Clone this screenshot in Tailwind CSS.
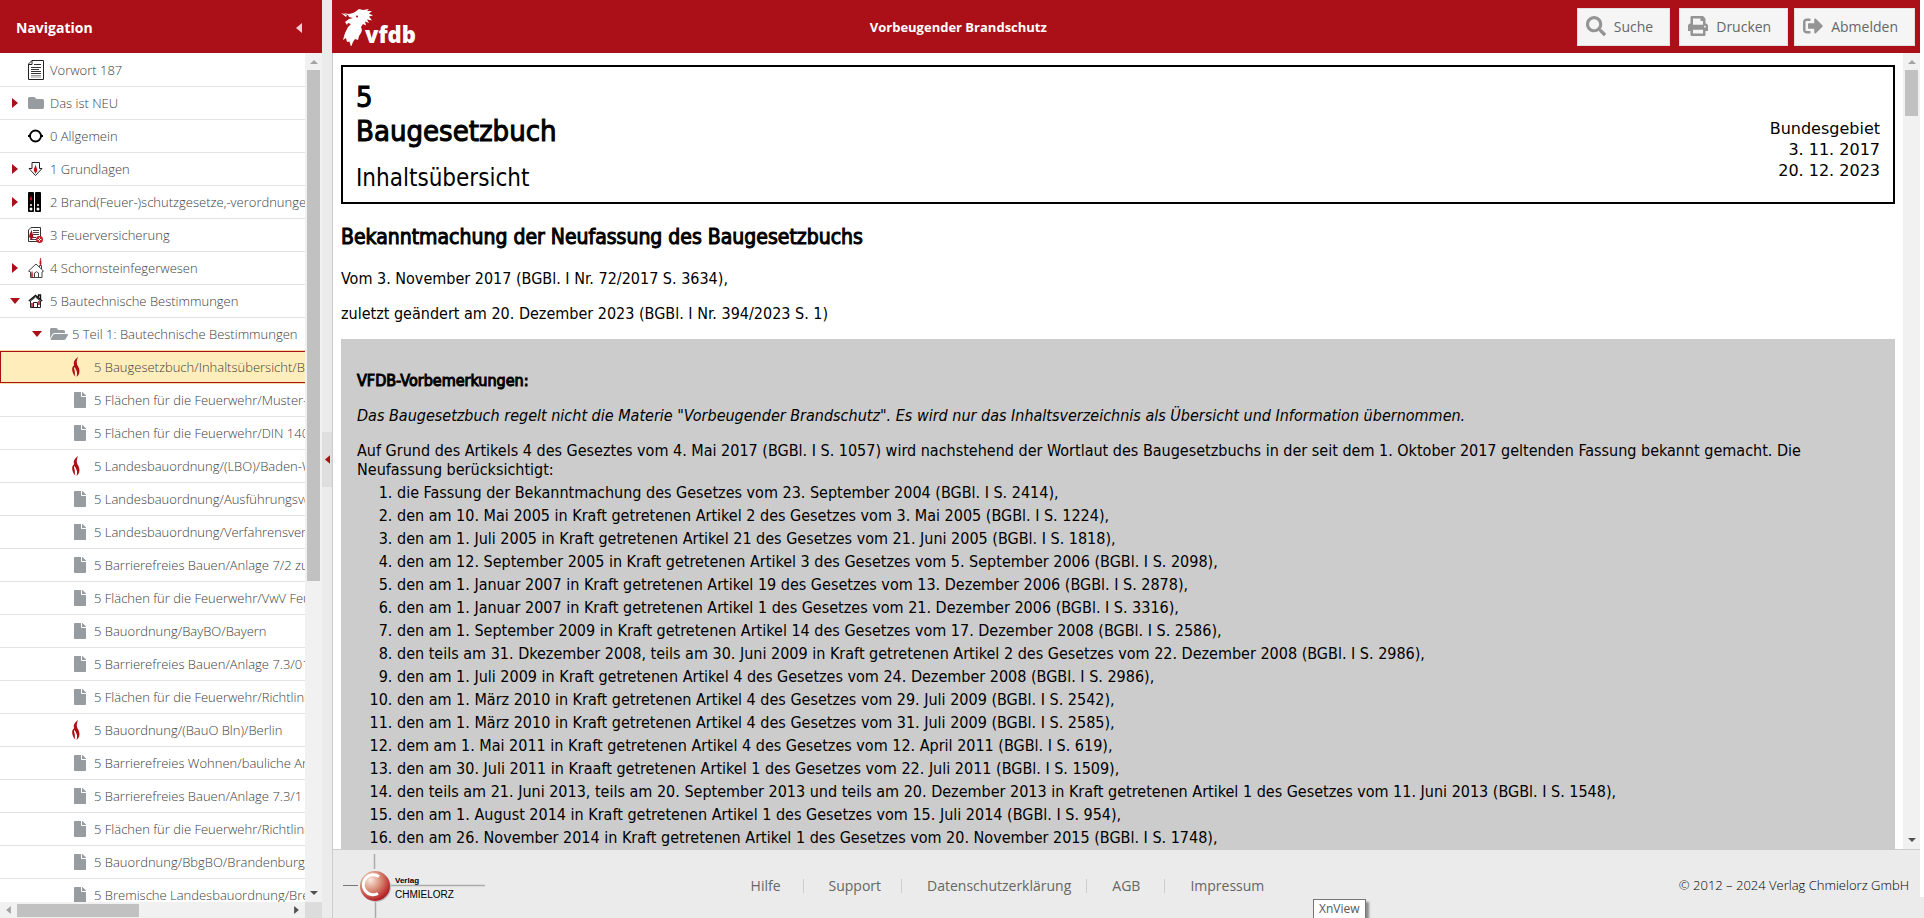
<!DOCTYPE html>
<html lang="de">
<head>
    <meta charset="UTF-8">
    <meta name="viewport" content="width=device-width, initial-scale=1.0">
    <title>Vorbeugender Brandschutz</title>
    <script src="https://cdn.jsdelivr.net/npm/@tailwindcss/browser@4"></script>
</head>
<body class="flex h-screen overflow-hidden bg-[#ebebeb] font-['Open_Sans',sans-serif]">
    <!-- Icon sprite -->
    <svg class="hidden">
        <symbol id="file" viewBox="0 0 384 512"><path d="M224 136V0H24C10.7 0 0 10.7 0 24v464c0 13.3 10.7 24 24 24h336c13.3 0 24-10.7 24-24V160H248c-13.2 0-24-10.8-24-24zm160-14.1v6.1H256V0h6.1c6.4 0 12.5 2.5 17 7l97.9 98c4.5 4.5 7 10.6 7 16.9z"/></symbol>
        <symbol id="flame" viewBox="0 0 8 20"><path d="M6 0C2.500 3 1 5 2.200 8 .5 9.500 0 11 .2 13c.2 2.500 1.300 4.500 3 6.500C2.500 16.500 3.300 15 2.200 12 1.900 11 2 10.500 2.500 10c2 3.500 3.500 5 2 10C7 18.500 7.900 15.500 7.300 12.500 7 10.500 6 9.500 5.300 8 4.300 5.500 4.800 3 6 0z"/></symbol>
        <symbol id="right" viewBox="0 0 6 10"><path d="M0 0l6 5-6 5z"/></symbol>
        <symbol id="down" viewBox="0 0 10 6"><path d="M0 0h10L5 6z"/></symbol>
        <symbol id="left" viewBox="0 0 6 10"><path d="M6 0L0 5l6 5z"/></symbol>
        <symbol id="up" viewBox="0 0 8 4"><path d="M0 4h8L4 0z"/></symbol>
    </svg>

    <!-- Navigation -->
    <nav class="flex w-[322px] shrink-0 flex-col bg-white">
        <header class="flex h-[53px] shrink-0 items-center justify-between bg-[#ab0f17] pr-5 pl-4 pt-[2px]">
            <h2 class="text-sm font-bold text-white">Navigation</h2>
            <button type="button" aria-label="Navigation schließen"><svg class="h-[10px] w-[6px] fill-white/80"><use href="#left"/></svg></button>
        </header>
        <div class="flex min-h-0 flex-1">
            <ul class="min-w-0 flex-1 overflow-hidden pt-px text-[13px] font-light whitespace-nowrap text-[#404040] [&_a]:pt-[2px]">
                <li class="flex h-[33px] items-center border-b border-[#e3e3e3] pl-[28px]">
                    <svg class="mr-[6px] h-5 w-4 shrink-0" viewBox="0 0 16 20"><path d="M4 .500h11.500v19H.5V4z" fill="#fff" stroke="#222"/><path d="M.5 4.500H4V.5" fill="none" stroke="#222"/><path d="M6 4.500h7M3 7.500h10M3 9.500h8M3 11.500h10M3 13.500h10" stroke="#333"/><path d="M3 15.500h10M3 17h10" stroke="#999"/></svg>
                    <a href="#">Vorwort 187</a>
                </li>
                <li class="flex h-[33px] items-center border-b border-[#e3e3e3] pl-3">
                    <svg class="mr-[10px] h-[10px] w-[6px] shrink-0 fill-[#ab0f17]"><use href="#right"/></svg>
                    <svg class="mr-[6px] size-4 shrink-0 fill-[#979ca0]" viewBox="0 0 512 512"><path d="M464 128H272l-64-64H48C21.490 64 0 85.490 0 112v288c0 26.510 21.490 48 48 48h416c26.510 0 48-21.490 48-48V176c0-26.510-21.490-48-48-48z"/></svg>
                    <a href="#">Das ist NEU</a>
                </li>
                <li class="flex h-[33px] items-center border-b border-[#e3e3e3] pl-[28px]">
                    <svg class="mr-[6px] size-4 shrink-0" viewBox="0 0 16 16"><circle cx="7.500" cy="8" r="5.500" fill="none" stroke="#000" stroke-width="1.800"/><path d="M0 8h3M12 8h3" stroke="#000" stroke-width="2"/></svg>
                    <a href="#">0 Allgemein</a>
                </li>
                <li class="flex h-[33px] items-center border-b border-[#e3e3e3] pl-3">
                    <svg class="mr-[10px] h-[10px] w-[6px] shrink-0 fill-[#ab0f17]"><use href="#right"/></svg>
                    <svg class="mr-[6px] size-4 shrink-0" viewBox="0 0 16 16"><path d="M4 1.500h7.500v6H14L7.500 14.500 1 7.500h3z" fill="#fff" stroke="#222"/><path d="M7.800 3C8 5 5.500 7 5.800 9.500L7.500 12.500 9.200 10C9.500 7.500 7.800 6 7.800 3z" fill="#c3101a"/></svg>
                    <a href="#">1 Grundlagen</a>
                </li>
                <li class="flex h-[33px] items-center border-b border-[#e3e3e3] pl-3">
                    <svg class="mr-[10px] h-[10px] w-[6px] shrink-0 fill-[#ab0f17]"><use href="#right"/></svg>
                    <svg class="mr-[6px] h-5 w-4 shrink-0" viewBox="0 0 16 20"><rect width="6" height="20" rx="1"/><rect x="7" width="6" height="20" rx="1"/><path d="M3 3C3 5 1.500 5.500 1.800 7.500L3 9l1.200-1.500C4.500 5.500 3 5 3 3z" fill="#c3101a"/><g fill="#fff"><circle cx="3" cy="13" r="1"/><circle cx="10" cy="13" r="1"/><circle cx="3" cy="17" r="1.500"/><circle cx="10" cy="17" r="1.500"/></g></svg>
                    <a href="#">2 Brand(Feuer-)schutzgesetze,-verordnungen</a>
                </li>
                <li class="flex h-[33px] items-center border-b border-[#e3e3e3] pl-[28px]">
                    <svg class="mr-[6px] size-4 shrink-0" viewBox="0 0 16 16"><path d="M3 .500h9.500v14H.5V3z" fill="#fff" stroke="#333"/><path d="M5 3.500h6M5 5.500h6M5 7.500h6M2 10.500h6M2 12.500h6" stroke="#444"/><path d="M3.500 1C4 5 1 6 1.200 10l2.300 3 1.800-3C5.500 7 3.500 5 3.500 1z" fill="#ab0f17"/><circle cx="11.500" cy="12.500" r="2.700" fill="#fff" stroke="#c3101a" stroke-width="1.500"/><path d="M10 11l3 3m0-3l-3 3" stroke="#c3101a"/></svg>
                    <a href="#">3 Feuerversicherung</a>
                </li>
                <li class="flex h-[33px] items-center border-b border-[#e3e3e3] pl-3">
                    <svg class="mr-[10px] h-[10px] w-[6px] shrink-0 fill-[#ab0f17]"><use href="#right"/></svg>
                    <svg class="mr-[6px] h-5 w-4 shrink-0" viewBox="0 0 16 20"><path d="M.5 13L8 6l7.500 7-1.500 1v5.500H2.500V14zM11.500 9V7.500h2V11M6.500 19v-4q2-2.500 4 0v4" fill="#fff" stroke="#444"/><path d="M12.500 0C12.500 3 11 4 12.500 7.500 14 4.500 12.500 3 12.500 0zM4 13.500C4 16 2.500 16.500 4 19.500 5.500 17 4 16 4 13.500z" fill="#c3101a" stroke="#c3101a" stroke-width=".6"/></svg>
                    <a href="#">4 Schornsteinfegerwesen</a>
                </li>
                <li class="flex h-[33px] items-center border-b border-[#e3e3e3] pl-[10px]">
                    <svg class="mr-2 h-[6px] w-[10px] shrink-0 fill-[#ab0f17]"><use href="#down"/></svg>
                    <svg class="mr-[6px] size-4 shrink-0" viewBox="0 0 16 16"><path d="M2.500 8v6.500h10V8L7.500 4z" fill="#fff" stroke="#222"/><path d="M.8 8L7.500 2.500 14.200 8M10.500 4.500V2h2v4" fill="none" stroke="#111" stroke-width="1.400"/><path d="M5.500 14V9.500h4V14" fill="none" stroke="#222"/><path d="M4 10v4M11 8v4" stroke="#c3101a" stroke-width="1.500"/></svg>
                    <a href="#">5 Bautechnische Bestimmungen</a>
                </li>
                <li class="flex h-[33px] items-center border-b border-[#f5dca0] pl-8">
                    <svg class="mr-2 h-[6px] w-[10px] shrink-0 fill-[#ab0f17]"><use href="#down"/></svg>
                    <svg class="mr-1 h-4 w-[18px] shrink-0 fill-[#979ca0]" viewBox="0 0 576 512"><path d="M572.694 292.093L500.270 416.248A63.997 63.997 0 0 1 444.989 448H45.025c-18.523 0-30.064-20.093-20.731-36.093l72.424-124.155A64 64 0 0 1 152 256h399.964c18.523 0 30.064 20.093 20.730 36.093zM152 224h328v-48c0-26.510-21.490-48-48-48H272l-64-64H48C21.490 64 0 85.490 0 112v278.046l69.077-118.418C86.214 242.250 117.989 224 152 224z"/></svg>
                    <a href="#">5 Teil 1: Bautechnische Bestimmungen</a>
                </li>
                <li class="border-b border-[#f5dca0]">
                    <div class="flex h-8 items-center border-y border-l border-[#ab0f17] bg-[#ffeebb] pl-[71px]">
                        <svg class="mr-[14px] h-5 w-2 shrink-0 fill-[#ab0f17]"><use href="#flame"/></svg>
                        <a href="#">5 Baugesetzbuch/Inhaltsübersicht/Bund</a>
                    </div>
                </li>
                <li class="flex h-[33px] items-center border-b border-[#e3e3e3] pl-[74px]">
                    <svg class="mr-2 h-4 w-3 shrink-0 fill-[#979ca0]"><use href="#file"/></svg>
                    <a href="#">5 Flächen für die Feuerwehr/Muster-Richtlinie</a>
                </li>
                <li class="flex h-[33px] items-center border-b border-[#e3e3e3] pl-[74px]">
                    <svg class="mr-2 h-4 w-3 shrink-0 fill-[#979ca0]"><use href="#file"/></svg>
                    <a href="#">5 Flächen für die Feuerwehr/DIN 14090</a>
                </li>
                <li class="flex h-[33px] items-center border-b border-[#e3e3e3] pl-[72px]">
                    <svg class="mr-[14px] h-5 w-2 shrink-0 fill-[#ab0f17]"><use href="#flame"/></svg>
                    <a href="#">5 Landesbauordnung/(LBO)/Baden-Württemberg</a>
                </li>
                <li class="flex h-[33px] items-center border-b border-[#e3e3e3] pl-[74px]">
                    <svg class="mr-2 h-4 w-3 shrink-0 fill-[#979ca0]"><use href="#file"/></svg>
                    <a href="#">5 Landesbauordnung/Ausführungsverordnung</a>
                </li>
                <li class="flex h-[33px] items-center border-b border-[#e3e3e3] pl-[74px]">
                    <svg class="mr-2 h-4 w-3 shrink-0 fill-[#979ca0]"><use href="#file"/></svg>
                    <a href="#">5 Landesbauordnung/Verfahrensverordnung</a>
                </li>
                <li class="flex h-[33px] items-center border-b border-[#e3e3e3] pl-[74px]">
                    <svg class="mr-2 h-4 w-3 shrink-0 fill-[#979ca0]"><use href="#file"/></svg>
                    <a href="#">5 Barrierefreies Bauen/Anlage 7/2 zur VwV</a>
                </li>
                <li class="flex h-[33px] items-center border-b border-[#e3e3e3] pl-[74px]">
                    <svg class="mr-2 h-4 w-3 shrink-0 fill-[#979ca0]"><use href="#file"/></svg>
                    <a href="#">5 Flächen für die Feuerwehr/VwV Feuerwehrflächen</a>
                </li>
                <li class="flex h-[33px] items-center border-b border-[#e3e3e3] pl-[74px]">
                    <svg class="mr-2 h-4 w-3 shrink-0 fill-[#979ca0]"><use href="#file"/></svg>
                    <a href="#">5 Bauordnung/BayBO/Bayern</a>
                </li>
                <li class="flex h-[33px] items-center border-b border-[#e3e3e3] pl-[74px]">
                    <svg class="mr-2 h-4 w-3 shrink-0 fill-[#979ca0]"><use href="#file"/></svg>
                    <a href="#">5 Barrierefreies Bauen/Anlage 7.3/01 Bayern</a>
                </li>
                <li class="flex h-[33px] items-center border-b border-[#e3e3e3] pl-[74px]">
                    <svg class="mr-2 h-4 w-3 shrink-0 fill-[#979ca0]"><use href="#file"/></svg>
                    <a href="#">5 Flächen für die Feuerwehr/Richtlinie</a>
                </li>
                <li class="flex h-[33px] items-center border-b border-[#e3e3e3] pl-[72px]">
                    <svg class="mr-[14px] h-5 w-2 shrink-0 fill-[#ab0f17]"><use href="#flame"/></svg>
                    <a href="#">5 Bauordnung/(BauO Bln)/Berlin</a>
                </li>
                <li class="flex h-[33px] items-center border-b border-[#e3e3e3] pl-[74px]">
                    <svg class="mr-2 h-4 w-3 shrink-0 fill-[#979ca0]"><use href="#file"/></svg>
                    <a href="#">5 Barrierefreies Wohnen/bauliche Anlagen</a>
                </li>
                <li class="flex h-[33px] items-center border-b border-[#e3e3e3] pl-[74px]">
                    <svg class="mr-2 h-4 w-3 shrink-0 fill-[#979ca0]"><use href="#file"/></svg>
                    <a href="#">5 Barrierefreies Bauen/Anlage 7.3/1</a>
                </li>
                <li class="flex h-[33px] items-center border-b border-[#e3e3e3] pl-[74px]">
                    <svg class="mr-2 h-4 w-3 shrink-0 fill-[#979ca0]"><use href="#file"/></svg>
                    <a href="#">5 Flächen für die Feuerwehr/Richtlinie</a>
                </li>
                <li class="flex h-[33px] items-center border-b border-[#e3e3e3] pl-[74px]">
                    <svg class="mr-2 h-4 w-3 shrink-0 fill-[#979ca0]"><use href="#file"/></svg>
                    <a href="#">5 Bauordnung/BbgBO/Brandenburg</a>
                </li>
                <li class="flex h-[33px] items-center border-b border-[#e3e3e3] pl-[74px]">
                    <svg class="mr-2 h-4 w-3 shrink-0 fill-[#979ca0]"><use href="#file"/></svg>
                    <a href="#">5 Bremische Landesbauordnung/Bremen</a>
                </li>
            </ul>
            <div class="flex w-[17px] shrink-0 flex-col items-center justify-between bg-[#f1f1f1] pt-[7px] pb-[7px]">
                <div class="flex min-h-0 flex-1 flex-col items-center gap-[6px]">
                    <svg class="h-1 w-2 shrink-0 fill-[#a3a3a3]"><use href="#up"/></svg>
                    <div class="h-[61.5%] w-[13px] bg-[#c1c1c1]"></div>
                </div>
                <svg class="h-1 w-2 shrink-0 fill-[#505050]" viewBox="0 0 8 4"><path d="M0 0h8L4 4z"/></svg>
            </div>
        </div>
        <div class="flex h-4 shrink-0 bg-[#dcdcdc]">
            <div class="flex flex-1 items-center bg-[#f1f1f1] pr-[6px] pl-[6px]">
                <svg class="mr-[6px] h-2 w-[5px] fill-[#a3a3a3]"><use href="#left"/></svg>
                <div class="h-[13px] w-[122px] bg-[#c1c1c1]"></div>
                <svg class="ml-auto h-2 w-[5px] fill-[#505050]"><use href="#right"/></svg>
            </div>
            <div class="w-[17px]"></div>
        </div>
    </nav>

    <!-- Splitter -->
    <div class="flex w-[10px] shrink-0 items-center">
        <button type="button" aria-label="Navigation einklappen" class="flex h-[55px] w-full items-center justify-center bg-[#dedede]"><svg class="h-[9px] w-[5px] fill-[#ab0f17]"><use href="#left"/></svg></button>
    </div>

    <!-- Main -->
    <div class="flex min-w-0 flex-1 flex-col">
        <header class="flex h-[53px] shrink-0 items-center bg-[#ab0f17] pr-[5px] pl-[9px]">
            <a href="#" class="flex items-center" aria-label="vfdb">
                <svg class="h-[38px] w-[36px] shrink-0 fill-white" viewBox="0 0 36 38"><path d="M14 4L18 1l4 1 6-1-2 2 5 0-3 2.500 4 2-4 1 3 4-5-1 2 3.500-4-1.500 1 4-3-1.500-2 3 1 3-1 3-2 3-1 4-3-1-2 3-2 5-1.500-5.500L6 34l-1-4-3 2 2-7 3-6 3-3-3-1-1 2-2-3 4-3 4-1-4-1-1-2-5-2 6 1 4-1z"/><path d="M0 5l6 2-1 2z"/><circle cx="16" cy="8.500" r="1" fill="#ab0f17"/></svg>
                <span class="-ml-[12px] pt-[14px] text-[22px] leading-6 font-extrabold text-white">vfdb</span>
            </a>
            <h1 class="flex-1 pr-[76px] pt-[2px] text-center text-[13px] font-bold text-white">Vorbeugender Brandschutz</h1>
            <div class="flex gap-[6px] pt-2 pb-[7px] text-sm text-[#666]">
                <button type="button" class="mr-[3px] flex h-[38px] items-center gap-2 border border-[#e0e0e0] bg-[#f5f5f5] px-2 pr-4 pb-[2px]">
                    <svg class="size-5 fill-[#949494]" viewBox="0 0 512 512"><path d="M505 442.700L405.300 343c-4.500-4.500-10.600-7-17-7H372c27.600-35.300 44-79.700 44-128C416 93.100 322.900 0 208 0S0 93.100 0 208s93.100 208 208 208c48.300 0 92.700-16.400 128-44v16.300c0 6.400 2.500 12.500 7 17l99.700 99.700c9.400 9.400 24.600 9.400 33.900 0l28.300-28.300c9.400-9.400 9.400-24.600.1-34zM208 336c-70.700 0-128-57.200-128-128 0-70.700 57.200-128 128-128 70.700 0 128 57.200 128 128 0 70.700-57.200 128-128 128z"/></svg>
                    <span class="pt-[2px]">Suche</span>
                </button>
                <button type="button" class="flex h-[38px] items-center gap-2 border border-[#e0e0e0] bg-[#f5f5f5] px-2 pr-4 pb-[2px]">
                    <svg class="size-5 fill-[#949494]" viewBox="0 0 512 512"><path d="M448 192V77.250c0-8.490-3.370-16.620-9.370-22.630L393.370 9.370c-6-6-14.140-9.370-22.630-9.370H96C78.330 0 64 14.330 64 32v160c-35.350 0-64 28.650-64 64v112c0 8.840 7.160 16 16 16h48v96c0 17.670 14.330 32 32 32h320c17.670 0 32-14.330 32-32v-96h48c8.840 0 16-7.160 16-16V256c0-35.350-28.650-64-64-64zm-64 256H128v-96h256v96zm0-224H128V64h192v48c0 8.840 7.160 16 16 16h48v96zm48 72c-13.250 0-24-10.750-24-24 0-13.260 10.750-24 24-24s24 10.740 24 24c0 13.250-10.750 24-24 24z"/></svg>
                    <span class="pt-[2px]">Drucken</span>
                </button>
                <button type="button" class="flex h-[38px] items-center gap-2 border border-[#e0e0e0] bg-[#f5f5f5] px-2 pr-4 pb-[2px]">
                    <svg class="size-5 fill-[#949494]" viewBox="0 0 512 512"><path d="M497 273L329 441c-15 15-41 4.500-41-17v-96H152c-13.300 0-24-10.700-24-24v-96c0-13.300 10.700-24 24-24h136V88c0-21.400 25.900-32 41-17l168 168c9.300 9.400 9.300 24.600 0 34zM192 436v-40c0-6.600-5.400-12-12-12H96c-17.700 0-32-14.300-32-32V160c0-17.700 14.300-32 32-32h84c6.600 0 12-5.400 12-12V76c0-6.600-5.400-12-12-12H96c-53 0-96 43-96 96v192c0 53 43 96 96 96h84c6.600 0 12-5.400 12-12z"/></svg>
                    <span class="pt-[2px]">Abmelden</span>
                </button>
            </div>
        </header>

        <div class="flex min-h-0 flex-1 border-l border-[#ccc] bg-white">
            <main class="min-w-0 flex-1 overflow-hidden px-2 pt-3 font-['DejaVu_Sans_Condensed','DejaVu_Sans',sans-serif] text-base leading-[19px] font-normal text-black">
                <div class="flex items-end justify-between border-2 border-black px-[13px] pt-[13px] pb-2">
                    <div>
                        <h1 class="text-[29px] leading-[34px] [-webkit-text-stroke:1px]">5<br>Baugesetzbuch</h1>
                        <p class="mt-[14px] text-2xl leading-8">Inhaltsübersicht</p>
                    </div>
                    <p class="pb-[13px] text-right font-['DejaVu_Sans',sans-serif] text-base leading-[21px]">Bundesgebiet<br>3. 11. 2017<br>20. 12. 2023</p>
                </div>
                <h2 class="mt-[21px] text-[21px] leading-6 [-webkit-text-stroke:1px]">Bekanntmachung der Neufassung des Baugesetzbuchs</h2>
                <p class="mt-5">Vom 3. November 2017 (BGBl. I Nr. 72/2017 S. 3634),</p>
                <p class="mt-4">zuletzt geändert am 20. Dezember 2023 (BGBl. I Nr. 394/2023 S. 1)</p>
                <section class="mt-4 bg-[#ccc] px-4 pt-8 pb-8">
                    <h3 class="[-webkit-text-stroke:1px]">VFDB-Vorbemerkungen:</h3>
                    <p class="mt-4 italic">Das Baugesetzbuch regelt nicht die Materie "Vorbeugender Brandschutz". Es wird nur das Inhaltsverzeichnis als Übersicht und Information übernommen.</p>
                    <p class="mt-4">Auf Grund des Artikels 4 des Geseztes vom 4. Mai 2017 (BGBl. I S. 1057) wird nachstehend der Wortlaut des Baugesetzbuchs in der seit dem 1. Oktober 2017 geltenden Fassung bekannt gemacht. Die Neufassung berücksichtigt:</p>
                    <ol class="mt-[2px] list-decimal pl-10 leading-[23px]">
                        <li>die Fassung der Bekanntmachung des Gesetzes vom 23. September 2004 (BGBl. I S. 2414),</li>
                        <li>den am 10. Mai 2005 in Kraft getretenen Artikel 2 des Gesetzes vom 3. Mai 2005 (BGBl. I S. 1224),</li>
                        <li>den am 1. Juli 2005 in Kraft getretenen Artikel 21 des Gesetzes vom 21. Juni 2005 (BGBl. I S. 1818),</li>
                        <li>den am 12. September 2005 in Kraft getretenen Artikel 3 des Gesetzes vom 5. September 2006 (BGBl. I S. 2098),</li>
                        <li>den am 1. Januar 2007 in Kraft getretenen Artikel 19 des Gesetzes vom 13. Dezember 2006 (BGBl. I S. 2878),</li>
                        <li>den am 1. Januar 2007 in Kraft getretenen Artikel 1 des Gesetzes vom 21. Dezember 2006 (BGBl. I S. 3316),</li>
                        <li>den am 1. September 2009 in Kraft getretenen Artikel 14 des Gesetzes vom 17. Dezember 2008 (BGBl. I S. 2586),</li>
                        <li>den teils am 31. Dkezember 2008, teils am 30. Juni 2009 in Kraft getretenen Artikel 2 des Gesetzes vom 22. Dezember 2008 (BGBl. I S. 2986),</li>
                        <li>den am 1. Juli 2009 in Kraft getretenen Artikel 4 des Gesetzes vom 24. Dezember 2008 (BGBl. I S. 2986),</li>
                        <li>den am 1. März 2010 in Kraft getretenen Artikel 4 des Gesetzes vom 29. Juli 2009 (BGBl. I S. 2542),</li>
                        <li>den am 1. März 2010 in Kraft getretenen Artikel 4 des Gesetzes vom 31. Juli 2009 (BGBl. I S. 2585),</li>
                        <li>dem am 1. Mai 2011 in Kraft getretenen Artikel 4 des Gesetzes vom 12. April 2011 (BGBl. I S. 619),</li>
                        <li>den am 30. Juli 2011 in Kraaft getretenen Artikel 1 des Gesetzes vom 22. Juli 2011 (BGBl. I S. 1509),</li>
                        <li>den teils am 21. Juni 2013, teils am 20. September 2013 und teils am 20. Dezember 2013 in Kraft getretenen Artikel 1 des Gesetzes vom 11. Juni 2013 (BGBl. I S. 1548),</li>
                        <li>den am 1. August 2014 in Kraft getretenen Artikel 1 des Gesetzes vom 15. Juli 2014 (BGBl. I S. 954),</li>
                        <li>den am 26. November 2014 in Kraft getretenen Artikel 1 des Gesetzes vom 20. November 2015 (BGBl. I S. 1748),</li>
                    </ol>
                </section>
            </main>
            <div class="flex w-[17px] shrink-0 flex-col items-center justify-between bg-[#f1f1f1] pt-[7px] pb-[7px]">
                <div class="flex flex-col items-center gap-[6px]">
                    <svg class="h-1 w-2 fill-[#a3a3a3]"><use href="#up"/></svg>
                    <div class="h-[46px] w-[13px] bg-[#c1c1c1]"></div>
                </div>
                <svg class="h-1 w-2 fill-[#505050]" viewBox="0 0 8 4"><path d="M0 0h8L4 4z"/></svg>
            </div>
        </div>

        <!-- Footer -->
        <footer class="relative flex h-[69px] shrink-0 items-center justify-between border-t border-l border-[#ccc] pr-[11px] pl-[10px]">
            <svg class="h-[68px] w-[143px] font-['Liberation_Sans',sans-serif]" viewBox="0 0 143 68">
                <defs>
                    <radialGradient id="ball" cx="35%" cy="30%" r="75%"><stop offset="0" stop-color="#fbe9e0"/><stop offset=".45" stop-color="#d98f78"/><stop offset="1" stop-color="#b0121a"/></radialGradient>
                </defs>
                <path d="M31.500 4v15M32.500 52v16M48 35.500h94" stroke="#aaa" stroke-width="1.500"/>
                <path d="M0 35.500h15" stroke="#777"/>
                <circle cx="33" cy="37" r="15" fill="#bbb"/>
                <circle cx="32" cy="36" r="15" fill="url(#ball)"/>
                <path d="M36 26.500a10 10 0 1 0-1 17" fill="none" stroke="#fff" stroke-width="3"/>
                <text x="52" y="33" font-size="8" font-weight="bold">Verlag</text>
                <text x="52" y="48" font-size="10">CHMIELORZ</text>
            </svg>
            <ul class="mr-[150px] flex divide-x divide-[#ccc] pt-1 text-sm leading-[14px] text-[#666]">
                <li class="pr-[22px]"><a href="#">Hilfe</a></li>
                <li class="pr-5 pl-[25px]"><a href="#">Support</a></li>
                <li class="pr-[15px] pl-[25px]"><a href="#">Datenschutzerklärung</a></li>
                <li class="pr-6 pl-[25px]"><a href="#">AGB</a></li>
                <li class="pl-[25px]"><a href="#">Impressum</a></li>
            </ul>
            <p class="pt-1 text-[13px] font-light text-black">© 2012 – 2024 Verlag Chmielorz GmbH</p>
            <div role="tooltip" class="absolute bottom-0 left-[980px] h-[19px] border border-b-0 border-[#767676] bg-white px-[5px] text-xs leading-[18px] text-[#575757] shadow-[3px_3px_2px_rgba(0,0,0,0.4)]">XnView</div>
        </footer>
    </div>

    <!-- Window edge -->
    <div class="flex w-1 shrink-0 flex-col pb-[21px]"><div class="flex-1 bg-white"></div></div>
</body>
</html>
